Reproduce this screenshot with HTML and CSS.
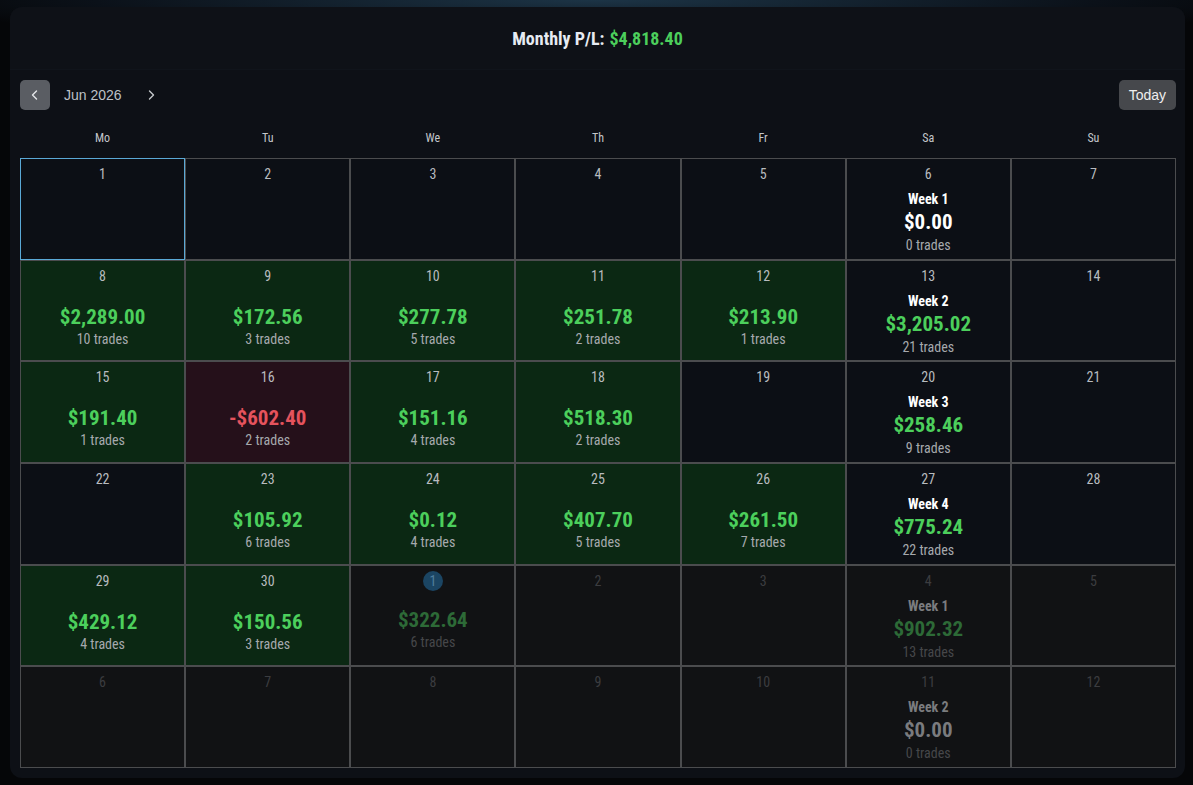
FILE: index.html
```html
<!DOCTYPE html>
<html lang="en">
<head>
    <meta charset="UTF-8">
    <meta name="viewport" content="width=device-width, initial-scale=1.0">
    <title>Trading Calendar</title>
    <link rel="stylesheet" href="styles.css">
</head>
<body>
    <div class="panel">
        <!-- Month summary -->
        <div class="summary">Monthly P/L: <span class="pos">$4,818.40</span></div>

        <!-- Month navigation -->
        <div class="toolbar">
            <div class="month-nav">
                <button class="nav-btn prev" aria-label="Previous month">
                    <svg viewBox="0 0 16 16" width="16" height="16"><path d="M9.5 4 5.5 8 9.5 12" /></svg>
                </button>
                <span class="month-label">Jun 2026</span>
                <button class="nav-btn next" aria-label="Next month">
                    <svg viewBox="0 0 16 16" width="16" height="16"><path d="M6.5 4 10.5 8 6.5 12" /></svg>
                </button>
            </div>
            <button class="today-btn">Today</button>
        </div>

        <div class="weekdays">
            <span>Mo</span><span>Tu</span><span>We</span><span>Th</span><span>Fr</span><span>Sa</span><span>Su</span>
        </div>

        <div class="calendar">
            <!-- week 1 -->
            <div class="day today"><div class="num">1</div></div>
            <div class="day"><div class="num">2</div></div>
            <div class="day"><div class="num">3</div></div>
            <div class="day"><div class="num">4</div></div>
            <div class="day"><div class="num">5</div></div>
            <div class="day week"><div class="num">6</div><div class="week-label">Week 1</div><div class="amount flat">$0.00</div><div class="trades">0 trades</div></div>
            <div class="day"><div class="num">7</div></div>

            <!-- week 2 -->
            <div class="day win"><div class="num">8</div><div class="amount pos">$2,289.00</div><div class="trades">10 trades</div></div>
            <div class="day win"><div class="num">9</div><div class="amount pos">$172.56</div><div class="trades">3 trades</div></div>
            <div class="day win"><div class="num">10</div><div class="amount pos">$277.78</div><div class="trades">5 trades</div></div>
            <div class="day win"><div class="num">11</div><div class="amount pos">$251.78</div><div class="trades">2 trades</div></div>
            <div class="day win"><div class="num">12</div><div class="amount pos">$213.90</div><div class="trades">1 trades</div></div>
            <div class="day week"><div class="num">13</div><div class="week-label">Week 2</div><div class="amount pos">$3,205.02</div><div class="trades">21 trades</div></div>
            <div class="day"><div class="num">14</div></div>

            <!-- week 3 -->
            <div class="day win"><div class="num">15</div><div class="amount pos">$191.40</div><div class="trades">1 trades</div></div>
            <div class="day loss"><div class="num">16</div><div class="amount neg">-$602.40</div><div class="trades">2 trades</div></div>
            <div class="day win"><div class="num">17</div><div class="amount pos">$151.16</div><div class="trades">4 trades</div></div>
            <div class="day win"><div class="num">18</div><div class="amount pos">$518.30</div><div class="trades">2 trades</div></div>
            <div class="day"><div class="num">19</div></div>
            <div class="day week"><div class="num">20</div><div class="week-label">Week 3</div><div class="amount pos">$258.46</div><div class="trades">9 trades</div></div>
            <div class="day"><div class="num">21</div></div>

            <!-- week 4 -->
            <div class="day"><div class="num">22</div></div>
            <div class="day win"><div class="num">23</div><div class="amount pos">$105.92</div><div class="trades">6 trades</div></div>
            <div class="day win"><div class="num">24</div><div class="amount pos">$0.12</div><div class="trades">4 trades</div></div>
            <div class="day win"><div class="num">25</div><div class="amount pos">$407.70</div><div class="trades">5 trades</div></div>
            <div class="day win"><div class="num">26</div><div class="amount pos">$261.50</div><div class="trades">7 trades</div></div>
            <div class="day week"><div class="num">27</div><div class="week-label">Week 4</div><div class="amount pos">$775.24</div><div class="trades">22 trades</div></div>
            <div class="day"><div class="num">28</div></div>

            <!-- week 5, runs into July -->
            <div class="day win"><div class="num">29</div><div class="amount pos">$429.12</div><div class="trades">4 trades</div></div>
            <div class="day win"><div class="num">30</div><div class="amount pos">$150.56</div><div class="trades">3 trades</div></div>
            <div class="day other"><div class="num"><span class="dot">1</span></div><div class="amount pos">$322.64</div><div class="trades">6 trades</div></div>
            <div class="day other"><div class="num">2</div></div>
            <div class="day other"><div class="num">3</div></div>
            <div class="day other week"><div class="num">4</div><div class="week-label">Week 1</div><div class="amount pos">$902.32</div><div class="trades">13 trades</div></div>
            <div class="day other"><div class="num">5</div></div>

            <!-- week 6 -->
            <div class="day other"><div class="num">6</div></div>
            <div class="day other"><div class="num">7</div></div>
            <div class="day other"><div class="num">8</div></div>
            <div class="day other"><div class="num">9</div></div>
            <div class="day other"><div class="num">10</div></div>
            <div class="day other week"><div class="num">11</div><div class="week-label">Week 2</div><div class="amount flat">$0.00</div><div class="trades">0 trades</div></div>
            <div class="day other"><div class="num">12</div></div>
        </div>
    </div>
</body>
</html>
```

FILE: styles.css
```css
/* General Styles */
* {
    box-sizing: border-box;
}

html, body {
    height: 100%;
}

body {
    margin: 0;
    padding: 7px 8px 7px 10px;
    font-family: 'Roboto Condensed', 'Roboto', sans-serif;
    background: radial-gradient(ellipse 60% 40px at 50% 0, #1c3446 0%, #0b1119 70%, #050608 100%), #050608;
    background-color: #050608;
    color: #bbb;
}

.panel {
    height: 100%;
    background-color: #0d1016;
    border-radius: 12px;
    padding: 0 9px 10px 10px;
    display: flex;
    flex-direction: column;
}

/* Header */
.summary {
    height: 63px;
    margin: 0 -9px 0 -10px;
    display: flex;
    align-items: center;
    justify-content: center;
    gap: 5px;
    font-size: 18px;
    font-weight: bold;
    color: #e6ebf2;
    background-color: #0e1117;
    border-bottom: 1px solid #10141b;
    border-radius: 12px 12px 0 0;
}

.pos {
    color: #4ccf5c;
}

.neg {
    color: #e5535d;
}

.flat {
    color: #fff;
}

/* Toolbar */
.toolbar {
    display: flex;
    justify-content: space-between;
    align-items: center;
    margin-top: 10px;
    font-family: 'Liberation Sans', Arial, sans-serif;
}

.month-nav {
    display: flex;
    align-items: center;
}

.nav-btn {
    width: 30px;
    height: 30px;
    border: none;
    border-radius: 5px;
    background: transparent;
    display: flex;
    align-items: center;
    justify-content: center;
    padding: 0;
    cursor: pointer;
}

.nav-btn svg path {
    fill: none;
    stroke: #c5c8cc;
    stroke-width: 1.4;
    stroke-linecap: round;
    stroke-linejoin: round;
}

.nav-btn.prev {
    background-color: #5a5d63;
}

.nav-btn.prev svg path {
    stroke: #e4e6e9;
}

.month-label {
    margin: 0 14px;
    font-size: 14px;
    color: #bcc0c6;
}

.today-btn {
    height: 30px;
    padding: 0 10px;
    border: none;
    border-radius: 5px;
    background-color: #46484c;
    color: #eee;
    font-family: 'Liberation Sans', Arial, sans-serif;
    font-size: 14px;
    cursor: pointer;
}

/* Weekday header */
.weekdays {
    display: grid;
    grid-template-columns: repeat(7, 1fr);
    margin: 18px 0 10px;
    height: 20px;
    line-height: 20px;
    text-align: center;
    font-size: 12px;
    color: #c4c7cb;
}

/* Calendar grid */
.calendar {
    flex: 1;
    display: grid;
    grid-template-columns: repeat(7, 1fr);
    grid-template-rows: repeat(6, 1fr);
}

.day {
    border: 1px solid #4b4c4e;
    background-color: #0c0f15;
    display: flex;
    flex-direction: column;
    align-items: center;
    text-align: center;
}

.day.today {
    border-color: #5aa9d6;
}

.day.win {
    background-color: #0b2813;
}

.day.loss {
    background-color: #25101a;
}

.num {
    margin-top: 6px;
    height: 18px;
    line-height: 18px;
    font-size: 14px;
    color: #b8bbbf;
}

.amount {
    margin-top: 20px;
    height: 24px;
    line-height: 24px;
    font-size: 21px;
    font-weight: bold;
}

.trades {
    margin-top: 2px;
    height: 16px;
    line-height: 16px;
    font-size: 14px;
    color: #a6a9ad;
}

.week-label {
    margin-top: 8px;
    height: 16px;
    line-height: 16px;
    font-size: 14px;
    font-weight: bold;
    color: #fff;
}

.week .amount {
    margin-top: 3px;
}

.week .trades {
    margin-top: 3px;
}

/* Days outside the current month */
.day.other {
    background-color: #111214;
}

.other .num {
    color: #3c3d40;
}

.other .dot {
    display: inline-block;
    width: 20px;
    height: 20px;
    line-height: 20px;
    border-radius: 50%;
    background-color: #1b4563;
    color: #4f7d9c;
}

.other .num:has(.dot) {
    margin-top: 5px;
    height: 20px;
    line-height: 20px;
}

.other .num:has(.dot) + .amount {
    margin-top: 17px;
}

.other .amount.pos {
    color: #2d6a37;
}

.other .amount.flat {
    color: #7a7b7e;
}

.other .week-label {
    color: #7b7c7f;
}

.other .trades {
    color: #46474a;
}
```
